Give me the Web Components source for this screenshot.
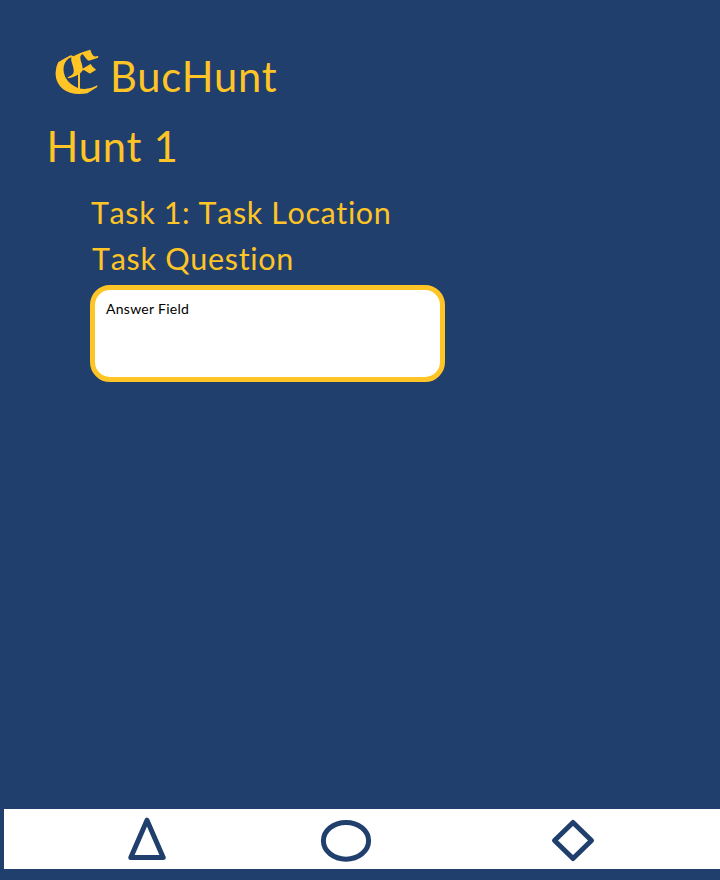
<!DOCTYPE html>
<html lang="en">
<head>
<meta charset="utf-8">
<title>BucHunt</title>
<style>
html,body{margin:0;height:100%;background:#213f6d}
</style>
</head>
<body>
<hunt-app></hunt-app>
<script>
const define = (name, html) => customElements.define(name, class extends HTMLElement {
  constructor() {
    super();
    const t = document.createElement('template');
    t.innerHTML = html;
    this.attachShadow({mode: 'open'}).append(t.content.cloneNode(true));
  }
});
define('hunt-brand', `<style>
:host{display:flex;height:60px;line-height:60px;font-size:41.6px;letter-spacing:.85px;white-space:nowrap}
.mark{position:relative;width:62px;letter-spacing:0;font-family:"DejaVu Math TeX Gyre","DejaVu Serif",serif;font-size:54px;padding-left:3px;box-sizing:border-box}
.glyph{display:block;transform:scaleX(1.06);transform-origin:0 0}
.mark::after{content:"";position:absolute;left:30px;top:10px;width:1.5px;height:37px;background:currentColor}
</style><span class="mark"><span class="glyph">&#x1D570;</span></span><span><slot></slot></span>`);
define('hunt-title', `<style>
:host{display:block;height:60px;line-height:60px;font-size:41.6px;letter-spacing:.85px;margin:10px 0 0 -1.5px;white-space:nowrap}
</style><slot></slot>`);
define('hunt-line', `<style>
:host{display:block;height:46px;line-height:46px;font-size:30.5px;letter-spacing:.6px;font-kerning:none;padding-left:1px;white-space:nowrap}
:host(.question){padding-left:2px;letter-spacing:.7px}
</style><slot></slot>`);
define('answer-field', `<style>
:host{display:block;box-sizing:border-box;width:355px;height:97px;margin-top:4px;border:5px solid #ffc425;border-radius:20px;background:#fff;color:#000;font-size:14px;letter-spacing:.28px;line-height:20px;padding:9px 11px}
</style><slot></slot>`);
define('hunt-task', `<style>
:host{display:block;margin:13px 0 0 42px}
</style><slot></slot>`);
define('nav-bar', `<style>
:host{display:flex;box-sizing:border-box;height:60px;margin:0 0 11px 4px;background:#fff;padding-left:122px;align-items:center}
svg{display:block;fill:none;stroke:#213f6d;stroke-width:5;stroke-linejoin:round}
.circle{margin-left:151px}.diamond{margin-left:177px}
</style>
<svg width="42" height="46" viewBox="126 816 42 46"><path d="M147 820.2 163.2 857.5H130.8Z"/></svg>
<svg class="circle" width="54" height="46" viewBox="319 816 54 46"><ellipse cx="346" cy="840.8" rx="22.6" ry="18.4"/></svg>
<svg class="diamond" width="46" height="46" viewBox="550 816 46 46"><path d="M573 822.5 591.5 840.5 573 858.5 554.5 840.5Z"/></svg>`);
define('hunt-app', `<style>
:host{display:flex;flex-direction:column;justify-content:space-between;box-sizing:border-box;width:720px;height:880px;background:#213f6d;color:#ffc425;font-family:Lato,sans-serif}
main{padding:46px 0 0 48px}
</style>
<main><hunt-brand>BucHunt</hunt-brand><hunt-title>Hunt 1</hunt-title>
<hunt-task><hunt-line>Task 1: Task Location</hunt-line><hunt-line class="question">Task Question</hunt-line><answer-field>Answer Field</answer-field></hunt-task></main>
<nav-bar></nav-bar>`);
</script>
</body>
</html>
